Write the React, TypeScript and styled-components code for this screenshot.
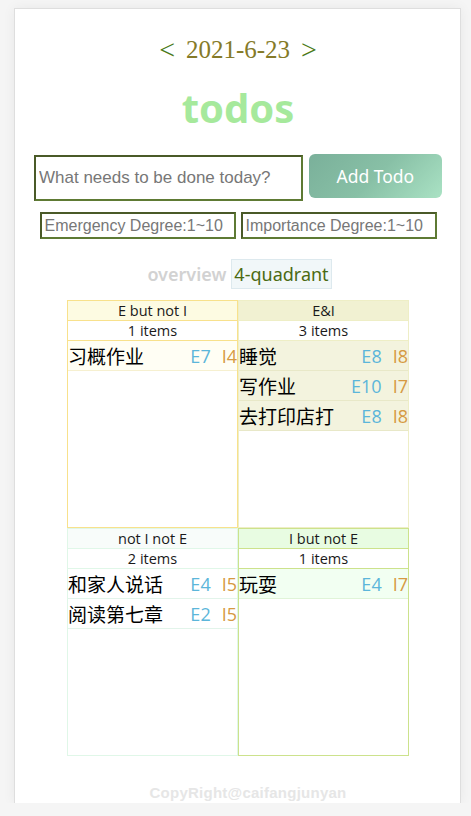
import styled, { createGlobalStyle } from "styled-components";

type TodoType = {
  id: number;
  title: string;
  e: number;
  i: number;
};

type QuadrantTheme = {
  border: string;
  head: string;
  item: string;
  line: string;
};

type QuadrantType = {
  name: string;
  theme: QuadrantTheme;
  todos: TodoType[];
};

const quadrants: QuadrantType[] = [
  {
    name: "E but not I",
    theme: { border: "#f8e18c", head: "#fdfbe2", item: "#fffef4", line: "#f6f0d0" },
    todos: [{ id: 1, title: "习概作业", e: 7, i: 4 }],
  },
  {
    name: "E&I",
    theme: { border: "#eeeec6", head: "#f1f1d2", item: "#f3f3de", line: "#e8e8c8" },
    todos: [
      { id: 2, title: "睡觉", e: 8, i: 8 },
      { id: 3, title: "写作业", e: 10, i: 7 },
      { id: 4, title: "去打印店打", e: 8, i: 8 },
    ],
  },
  {
    name: "not I not E",
    theme: { border: "#e0f7e8", head: "#f8fcfa", item: "#ffffff", line: "#e2f4ea" },
    todos: [
      { id: 5, title: "和家人说话", e: 4, i: 5 },
      { id: 6, title: "阅读第七章", e: 2, i: 5 },
    ],
  },
  {
    name: "I but not E",
    theme: { border: "#cce28c", head: "#e8fce2", item: "#f2fff2", line: "#e0f4d8" },
    todos: [{ id: 7, title: "玩耍", e: 4, i: 7 }],
  },
];

const GlobalStyle = createGlobalStyle`
  body {
    margin: 0;
    background: #f5f5f5;
    font-family: "Open Sans", "Noto Sans CJK SC", sans-serif;
  }
`;

function Quadrant({ quadrant }: { quadrant: QuadrantType }) {
  const { theme } = quadrant;
  return (
    <StyledQuadrant $border={theme.border}>
      <StyledQuadHead $bg={theme.head} $border={theme.border}>
        {quadrant.name}
      </StyledQuadHead>
      <StyledQuadHead $bg="#fff" $border={theme.border}>
        {quadrant.todos.length} items
      </StyledQuadHead>
      {quadrant.todos.map((todo) => (
        <StyledItem key={todo.id} $bg={theme.item} $line={theme.line}>
          <StyledItemTitle>{todo.title}</StyledItemTitle>
          <StyledDegree $color="#5cb6da">E{todo.e}</StyledDegree>
          <StyledDegree $color="#d69a42">I{todo.i}</StyledDegree>
        </StyledItem>
      ))}
    </StyledQuadrant>
  );
}

export default function App() {
  return (
    <>
      <GlobalStyle />
      <StyledCard>
        <StyledDateRow>
          <StyledArrow>&lt;</StyledArrow>
          <StyledDate>2021-6-23</StyledDate>
          <StyledArrow>&gt;</StyledArrow>
        </StyledDateRow>
        <StyledTitle>todos</StyledTitle>
        <StyledInputRow>
          <StyledTodoInput placeholder="What needs to be done today?" />
          <StyledAddButton>Add Todo</StyledAddButton>
        </StyledInputRow>
        <StyledDegreeRow>
          <StyledDegreeInput placeholder="Emergency Degree:1~10" />
          <StyledDegreeInput placeholder="Importance Degree:1~10" />
        </StyledDegreeRow>
        <StyledTabs>
          <StyledTab>overview</StyledTab>
          <StyledTab $active>4-quadrant</StyledTab>
        </StyledTabs>
        <StyledGrid>
          {quadrants.map((q) => (
            <Quadrant key={q.name} quadrant={q} />
          ))}
        </StyledGrid>
        <StyledFooter>CopyRight@caifangjunyan</StyledFooter>
      </StyledCard>
    </>
  );
}

const StyledCard = styled.div`
  box-sizing: border-box;
  width: 447px;
  margin: 8px 0 0 14px;
  padding: 25px 18px 0 19px;
  height: 795px;
  background: #fff;
  border: 1px solid #dedede;
  border-bottom: none;
  box-shadow: 0 0 12px rgba(0, 0, 0, 0.06);
  display: flex;
  flex-direction: column;
  align-items: center;
`;

const StyledDateRow = styled.div`
  display: flex;
  align-items: center;
  gap: 11px;
  height: 32px;
  font-family: "Liberation Serif", "DejaVu Serif", serif;
`;

const StyledArrow = styled.span`
  font-size: 28px;
  color: #4a7a18;
`;

const StyledDate = styled.span`
  font-size: 25px;
  color: #857a28;
`;

const StyledTitle = styled.h1`
  margin: 16px 0 0;
  height: 52px;
  line-height: 52px;
  font-family: "Noto Sans", sans-serif;
  font-size: 40px;
  font-weight: 700;
  color: #a6e99c;
`;

const StyledInputRow = styled.div`
  display: flex;
  align-self: stretch;
  gap: 6px;
  margin-top: 21px;
`;

const StyledTodoInput = styled.input`
  box-sizing: border-box;
  width: 270px;
  height: 46px;
  border: 2px solid #4a5a28;
  border-right-color: #5e7a34;
  border-bottom-color: #5e7a34;
  padding: 0 3px;
  font-family: "Liberation Sans", Arial, sans-serif;
  font-size: 17px;
  outline: none;
  &::placeholder {
    color: #777;
  }
`;

const StyledAddButton = styled.button`
  width: 134px;
  height: 44px;
  margin-top: -1px;
  border: 0;
  border-radius: 6px;
  background: linear-gradient(135deg, #7ab09a 0%, #88c0a6 50%, #aae2c4 100%);
  color: #fff;
  font-family: "Noto Sans", sans-serif;
  font-size: 17.5px;
  cursor: pointer;
`;

const StyledDegreeRow = styled.div`
  display: flex;
  gap: 5px;
  margin-top: 11px;
`;

const StyledDegreeInput = styled.input`
  box-sizing: border-box;
  width: 196px;
  height: 27px;
  border: 2px solid #4a5a28;
  border-right-color: #5e7a34;
  border-bottom-color: #5e7a34;
  padding: 0 3px;
  font-family: "Liberation Sans", Arial, sans-serif;
  font-size: 16px;
  outline: none;
  &::placeholder {
    color: #777;
  }
`;

const StyledTabs = styled.div`
  display: flex;
  align-items: center;
  gap: 2px;
  margin-top: 20px;
`;

const StyledTab = styled.span<{ $active?: boolean }>`
  font-family: "Noto Sans", sans-serif;
  font-size: 18px;
  line-height: 28px;
  padding: 0 2px;
  font-weight: ${(p) => (p.$active ? 400 : 600)};
  color: ${(p) => (p.$active ? "#4b6a12" : "#d2d2d2")};
  background: ${(p) => (p.$active ? "#f1f7f9" : "transparent")};
  border: 1px solid ${(p) => (p.$active ? "#dde9ee" : "transparent")};
`;

const StyledGrid = styled.div`
  display: grid;
  grid-template-columns: 171px 171px;
  grid-template-rows: 228px 228px;
  margin-top: 11px;
`;

const StyledQuadrant = styled.div<{ $border: string }>`
  box-sizing: border-box;
  border: 1px solid ${(p) => p.$border};
  display: flex;
  flex-direction: column;
  overflow: hidden;
`;

const StyledQuadHead = styled.div<{ $bg: string; $border: string }>`
  height: 19px;
  line-height: 20px;
  text-align: center;
  font-size: 14.5px;
  color: #1a1a1a;
  background: ${(p) => p.$bg};
  border-bottom: 1px solid ${(p) => p.$border};
`;

const StyledItem = styled.div<{ $bg: string; $line: string }>`
  display: flex;
  align-items: center;
  height: 29px;
  background: ${(p) => p.$bg};
  border-bottom: 1px solid ${(p) => p.$line};
  font-size: 19px;
`;

const StyledItemTitle = styled.span`
  flex: 1;
  color: #000;
  white-space: nowrap;
`;

const StyledDegree = styled.span<{ $color: string }>`
  font-family: "Open Sans", sans-serif;
  font-size: 18px;
  color: ${(p) => p.$color};
  margin-left: 11px;
  white-space: nowrap;
`;

const StyledFooter = styled.div`
  margin-top: 28px;
  padding-left: 20px;
  font-family: "Liberation Sans", Arial, sans-serif;
  font-size: 15px;
  letter-spacing: 0.25px;
  font-weight: 700;
  color: #e6e6e6;
`;
